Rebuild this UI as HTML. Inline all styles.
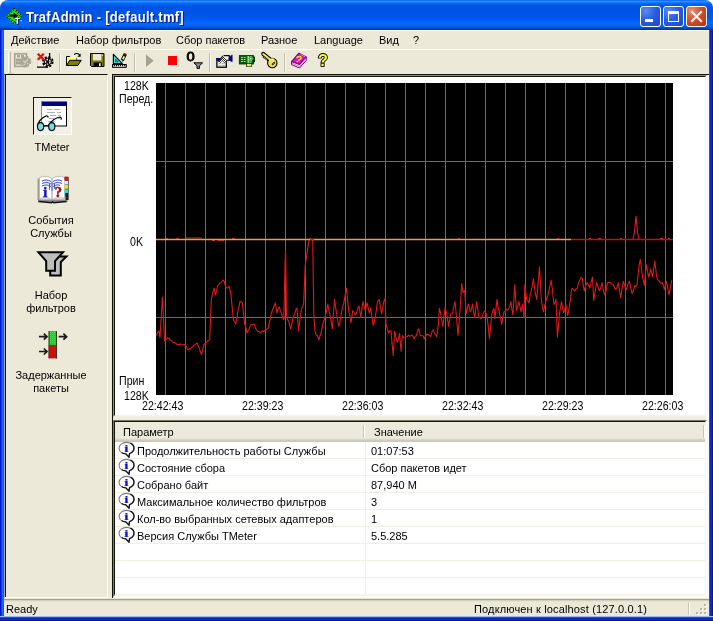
<!DOCTYPE html>
<html lang="ru">
<head>
<meta charset="utf-8">
<title>TrafAdmin - [default.tmf]</title>
<style>
html,body{margin:0;padding:0;background:#fff;}
body{width:713px;height:621px;position:relative;overflow:hidden;font-family:"Liberation Sans",sans-serif;font-size:11px;color:#000;}
.abs{position:absolute;}
#win{filter:brightness(1);position:absolute;left:0;top:0;width:713px;height:621px;background:#ece9d8;border-radius:8px 8px 0 0;overflow:hidden;}
#title{position:absolute;left:0;top:0;width:713px;height:30px;
 background:linear-gradient(to bottom,#0058ee 0%,#3593ff 4%,#288eff 6%,#127dff 8%,#036ffc 10%,#0262ee 14%,#0057e5 20%,#0054e3 24%,#0055eb 56%,#005bf5 66%,#026afe 76%,#0062ef 86%,#0052d6 92%,#0040ab 96%,#003092 100%);}
#title .cap{position:absolute;left:26px;top:10px;color:#fff;font-weight:bold;font-size:13px;line-height:16px;letter-spacing:0.28px;transform:scaleY(1.09);transform-origin:0 13px;white-space:nowrap;text-shadow:1px 1px 0 #0a1883;}
#bl{left:0;top:30px;width:4px;height:591px;background:linear-gradient(to right,#0019cf 0,#0019cf 1px,#0a3ce0 1px,#0a3ce0 2px,#1e66f0 2px,#1e66f0 3px,#2458c8 3px);}
#br{left:709px;top:30px;width:4px;height:591px;background:linear-gradient(to right,#2458d0 0,#2458d0 1px,#0030c0 1px,#0030c0 3px,#001494 3px);}
#bb{left:0;top:616px;width:713px;height:5px;background:linear-gradient(to bottom,#9cb8f4 0,#9cb8f4 1px,#2448c4 1px,#2448c4 2px,#0c30b8 2px,#0428b0 4px,#001c9c 4px);}
.tb{position:absolute;top:6px;width:21px;height:21px;border-radius:3px;box-sizing:border-box;border:1px solid #fff;}
.tb.b{background:radial-gradient(circle at 25% 20%,#5a8cf4 0,#2a5ee0 45%,#1c48c8 100%);}
.tb.r{background:radial-gradient(circle at 25% 20%,#f0906c 0,#d84c28 45%,#b83010 100%);}
#menu{left:4px;top:30px;width:705px;height:20px;background:#ece9d8;border-top:1px solid #fff;box-sizing:border-box;}
#menu span{position:absolute;top:3px;line-height:13px;white-space:nowrap;}
#tbar{left:4px;top:49px;width:705px;height:25px;background:#ece9d8;border-top:1px solid #fff;box-sizing:border-box;}
.sep{position:absolute;top:53px;width:1px;height:19px;background:#c2bfad;border-right:1px solid #f8f7f0;}
.lbl{position:absolute;white-space:nowrap;line-height:13px;text-align:center;}
.ch{position:absolute;white-space:nowrap;font-size:11px;line-height:13px;}
.cl{position:absolute;white-space:nowrap;font-size:12px;line-height:13px;transform:scaleX(0.885);transform-origin:0 0;}
.row{position:absolute;left:115px;width:590px;height:17px;border-bottom:1px solid #f0efe4;box-sizing:border-box;}
.row .t{position:absolute;left:22px;top:3px;line-height:13px;white-space:nowrap;}
.row .v{position:absolute;left:256px;top:3px;line-height:13px;white-space:nowrap;}
.row svg{position:absolute;left:3px;top:-1px;}
</style>
</head>
<body>
<div id="win">
<div id="title">
 <svg class="abs" style="left:4px;top:5px" width="22" height="22" viewBox="4 5 22 22">
<polygon points="14,7.600 22.400,16 14,24.400 5.600,16" fill="#1ed41e"/>
<polygon points="14,8.200 21.800,16 14,23.800 6.200,16" fill="none" stroke="#021402" stroke-width="1.100" stroke-dasharray="1.400 1.400"/>
<polygon points="14,10.100 19.900,16 14,21.900 8.100,16" fill="none" stroke="#063806" stroke-width="0.900" stroke-dasharray="1.400 1.400" stroke-dashoffset="1.400"/>
<polygon points="14,11 19,16 14,21 9,16" fill="#27e627"/>
<path d="M9.600 15.700H15" stroke="#031003" stroke-width="2.300"/>
<polygon points="13.600,12.300 18.200,15.700 13.600,19.100" fill="#031003"/>
<text x="15.600" y="24.600" font-family="Liberation Sans, sans-serif" font-weight="bold" font-size="8.500" fill="#0a1450">T</text>
<text x="14.800" y="23.900" font-family="Liberation Sans, sans-serif" font-weight="bold" font-size="8.500" fill="#f4f4f4">T</text>
<rect x="20.600" y="20" width="1.200" height="1.200" fill="#e8e8ff"/>
</svg>
 <div class="cap">TrafAdmin - [default.tmf]</div>
 <div class="tb b" style="left:640px"><div class="abs" style="left:4px;top:12px;width:8px;height:3px;background:#fff"></div></div>
 <div class="tb b" style="left:663px"><div class="abs" style="left:4px;top:4px;width:11px;height:11px;box-sizing:border-box;border:1px solid #fff;border-top-width:3px"></div></div>
 <div class="tb r" style="left:686px"><svg class="abs" style="left:0;top:0" width="19" height="19" viewBox="0 0 19 19"><path d="M5 5l9 9M14 5l-9 9" stroke="#fff" stroke-width="2.2" stroke-linecap="square"/></svg></div>
</div>
<div id="bl" class="abs"></div><div id="br" class="abs"></div><div id="bb" class="abs"></div>

<div id="menu" class="abs">
 <span style="left:7px">Действие</span>
 <span style="left:72px">Набор фильтров</span>
 <span style="left:172px">Сбор пакетов</span>
 <span style="left:257px">Разное</span>
 <span style="left:310px">Language</span>
 <span style="left:375px">Вид</span>
 <span style="left:409px">?</span>
</div>
<div id="tbar" class="abs"></div>
<svg class="abs" style="left:0;top:50px" width="340" height="24" viewBox="0 50 340 24">
<!-- gripper -->
<rect x="8" y="52" width="1" height="21" fill="#fff"/><rect x="9" y="52" width="1" height="21" fill="#e4e1d0"/><rect x="10" y="52" width="1" height="21" fill="#bdb9a6"/><rect x="8" y="73" width="6" height="1" fill="#c9c6b4"/>
<!-- 1 disabled settings -->
<rect x="14.800" y="53.800" width="11.600" height="12.600" fill="#f1efe4" stroke="#a9a695" stroke-width="1.700"/>
<g fill="#a9a695">
<rect x="17" y="55" width="3" height="2.500"/><rect x="16" y="58.500" width="6" height="3"/><rect x="16" y="61.500" width="5" height="3"/><rect x="21" y="55" width="3" height="3"/>
<circle cx="25.600" cy="61.600" r="4.700"/>
</g>
<circle cx="25.600" cy="61.600" r="5" fill="none" stroke="#a9a695" stroke-width="1.600" stroke-dasharray="2.100 1.830"/>
<path d="M23.200 60.800l1.800 1.900 2.900-3.600" stroke="#dcd9c8" stroke-width="1.100" fill="none"/>
<circle cx="24.200" cy="64.200" r="0.700" fill="#e6e3d2"/><circle cx="27.600" cy="63.800" r="0.700" fill="#e6e3d2"/>
<!-- 2 settings with red x -->
<rect x="37.500" y="53.500" width="12" height="13.500" fill="#f2f0e6" stroke="#dcd9c8" stroke-width="1"/>
<path d="M49.600 53v6M37 67.100h11" stroke="#000" stroke-width="1.300"/>
<circle cx="47.800" cy="61.800" r="4.100" fill="#000"/>
<circle cx="47.800" cy="61.800" r="4.800" fill="none" stroke="#000" stroke-width="2" stroke-dasharray="2.100 1.670"/>
<circle cx="47.800" cy="61.800" r="2.300" fill="none" stroke="#fbfbe4" stroke-width="1.300" stroke-dasharray="1.600 1.200"/>
<path d="M44.400 60l1 0.800M51 59.600l-0.800 0.900M45 65l0.900-0.900M50.800 64.600l-0.900-0.800" stroke="#fff" stroke-width="0.900"/>
<path d="M37.800 53.800l6 6M43.800 53.800l-6 6" stroke="#ee0808" stroke-width="2.300"/>
<!-- 3 open -->
<path d="M66.5 65.5v-9h3.2l1 1.3h5.3v2.2" fill="#ffff80" stroke="#000" stroke-width="1"/>
<rect x="67" y="57" width="9" height="8" fill="#ffff80"/>
<path d="M66.5 65.5l3.2-5.2h11.5l-3.4 5.2z" fill="#808000" stroke="#000" stroke-width="1"/>
<path d="M74.2 54.6c1.4-1.6 4.2-1.6 5.6 0.6" fill="none" stroke="#000" stroke-width="1.1"/>
<path d="M80.6 53.4v3.4h-3.2z" fill="#000"/>
<!-- 4 save -->
<path d="M90.5 53.5h13.5v13h-12.5l-1-1z" fill="#808000" stroke="#000" stroke-width="1"/>
<rect x="93" y="54" width="8.4" height="6.4" fill="#e9e7d6"/>
<rect x="93.6" y="62.4" width="8.4" height="4" fill="#000"/>
<rect x="99" y="63.2" width="1.6" height="3" fill="#fff"/>
<rect x="102" y="54.6" width="1" height="1.4" fill="#d8d6a8"/>
<!-- 5 triangle ruler pencil -->
<path d="M113.400 54.300v9.300h9z" fill="#3fe6ee" stroke="#000" stroke-width="1.200" stroke-linejoin="round"/>
<path d="M115.600 59.200v2.600h2.500z" fill="#8af4f8" stroke="#003838" stroke-width="0.900"/>
<rect x="112.600" y="64.600" width="13.600" height="2.700" fill="#fbfbf4" stroke="#000" stroke-width="1.100"/>
<path d="M114.500 64.600v1.600M116.500 64.600v1.600M118.500 64.600v1.600M120.500 64.600v1.600M122.500 64.600v1.600M124.500 64.600v1.600" stroke="#000" stroke-width="0.900"/>
<path d="M125.300 53.900l-3 6.300" stroke="#000" stroke-width="3.400" stroke-linecap="butt"/>
<path d="M124.300 56.300l-1.500 3.100" stroke="#f8ea80" stroke-width="1.900"/>
<path d="M125.500 53.600l-1 2.100" stroke="#5a1808" stroke-width="2.400"/>
<path d="M122.700 59.700l-1 2.300 2.200-1.500z" fill="#000"/>
<!-- 6 play disabled -->
<path d="M146 54.4v12.6l7.6-6.3z" fill="#a5a292"/>
<!-- 7 stop -->
<rect x="168" y="56" width="9" height="9" fill="#fb0000"/>
<!-- 8 zero + funnel -->
<text x="0" y="0" transform="translate(186.6,61.4) scale(1.32,1.08)" font-family="Liberation Sans, sans-serif" font-size="11.2" fill="#000" stroke="#000" stroke-width="0.7">0</text>
<path d="M193.8 62.8h8.8l-3.2 3v2.6h-2.4v-2.6z" fill="#8c8c8c" stroke="#000" stroke-width="1" stroke-linejoin="miter"/>
<!-- 9 properties -->
<defs><pattern id="chk" width="2" height="2" patternUnits="userSpaceOnUse"><rect width="2" height="2" fill="#fff"/><rect width="1" height="1" fill="#222"/><rect x="1" y="1" width="1" height="1" fill="#222"/></pattern></defs>
<rect x="216.900" y="58.800" width="9.400" height="8.400" fill="#f0eee2" stroke="#000" stroke-width="1.300"/>
<path d="M216.300 58.100h4.600l-2.200 3.300l-2.400-1.600z" fill="#000078"/>
<path d="M218.500 63.500h2.400M222 63.500h2.600M218.500 65.500h2.400M222 65.500h2.600" stroke="#b9b7aa" stroke-width="1"/>
<path d="M223.600 55.600h5.600v4.700h-3.400" fill="#f4f3ea" stroke="#000" stroke-width="1.100"/>
<path d="M218.600 61.400l4.400-5.600 4.200 4.800-2.800 2.400-2-2.400-2 2.400z" fill="url(#chk)"/>
<path d="M218.400 61.600l4.600-5.800" stroke="#111" stroke-width="1.100" fill="none"/>
<path d="M229.200 57l3-2.100v6.900l-3-1.600z" fill="#000084" stroke="#000084" stroke-width="0.600" stroke-linejoin="round"/>
<!-- 10 nic -->
<rect x="239.300" y="55.600" width="14.200" height="8.400" fill="#0b5c0b" stroke="#022802" stroke-width="0.800"/>
<rect x="252.800" y="56.600" width="2.200" height="5.600" fill="#033003"/>
<path d="M241 57.500h2M243.800 57.500h1.800M241 59.500h2M243.800 59.500h1.800M241 61.500h2M243.800 61.500h1.800" stroke="#8fe88f" stroke-width="1.100"/>
<rect x="247.400" y="56" width="1.700" height="8" fill="#8ee08e"/>
<circle cx="250.700" cy="58.600" r="2.100" fill="#22b822" stroke="#c8f8c8" stroke-width="0.800" stroke-dasharray="0.900 0.700"/>
<rect x="250.100" y="58" width="1.200" height="1.200" fill="#e8ffe8"/>
<rect x="249.600" y="61.200" width="2" height="2.200" fill="#6ad06a"/>
<rect x="246.500" y="63.600" width="5.200" height="3" fill="#d8d820" stroke="#1c1c00" stroke-width="0.700"/>
<path d="M248.200 64v2.400M250 64v2.400" stroke="#fffff0" stroke-width="0.700"/>
<!-- 11 key -->
<path d="M263.200 53.900l7 5.800" stroke="#000" stroke-width="4.100" stroke-linecap="round"/>
<path d="M263.400 56.400l1.500 1.500M265.300 57.800l1.500 1.500M267.300 59.400l1.300 1.300" stroke="#000" stroke-width="2.200"/>
<circle cx="272.300" cy="63" r="4.700" fill="#efe645" stroke="#000" stroke-width="1.100"/>
<path d="M263.300 54l7.400 6.100" stroke="#efe645" stroke-width="2.100" stroke-linecap="round"/>
<path d="M263.600 56.900l1 1M265.500 58.300l1 1" stroke="#e0d838" stroke-width="0.900"/>
<path d="M269.400 60.400a4 4 0 0 1 4.500-1.500" stroke="#fffbd0" stroke-width="0.900" fill="none"/>
<path d="M272.600 64.300l1.800-1.700" stroke="#000" stroke-width="1.700" stroke-linecap="round"/>
<path d="M272.800 64.100l1.400-1.300" stroke="#d8d4b0" stroke-width="0.600" stroke-linecap="round"/>
<!-- 12 book -->
<path d="M291.5 61.6v3l8 3.4 6.8-7.6v-3.2z" fill="#fbe6f6" stroke="#7c007c" stroke-width="1" stroke-linejoin="round"/>
<path d="M291.5 61.6l7.4-8.4 7.4 3.8-6.8 7.4z" fill="#d412c4" stroke="#7c007c" stroke-width="1.1" stroke-linejoin="round"/>
<path d="M292 63.2l7.6 3.2 6.4-7.2" stroke="#c060c0" stroke-width="0.8" fill="none"/>
<path d="M296.6 58.2c1-2.4 4.6-2.4 4.4 0-0.2 1.4-2 1.2-2.8 2.4" stroke="#ffe020" stroke-width="1.5" fill="none"/>
<circle cx="297.4" cy="61.6" r="0.9" fill="#ffe020"/>
<path d="M300.5 54.4l4.8 2.5" stroke="#ff60e8" stroke-width="1"/>
<!-- 13 question -->
<text x="318" y="66.2" font-family="Liberation Sans, sans-serif" font-weight="bold" font-size="16.2" fill="#ffff20" stroke="#000" stroke-width="1.9" paint-order="stroke" stroke-linejoin="round">?</text>
</svg>
<div class="sep" style="left:59px"></div><div class="sep" style="left:134px"></div><div class="sep" style="left:209px"></div><div class="sep" style="left:284px"></div>


<!-- left pane -->
<div class="abs" style="left:4px;top:74px;width:104px;height:524px;box-sizing:border-box;background:#ece9d8;border-left:1px solid #a4a8b8;border-top:1px solid #15150a;border-right:1px solid #fff;border-bottom:1px solid #fff;"></div>
<div class="abs" style="left:5px;top:74px;width:1px;height:523px;background:#15150a"></div>

<!-- TMeter selected box -->
<div class="abs" style="left:33px;top:97px;width:39px;height:38px;box-sizing:border-box;background:#f2f0e6;border-top:1px solid #15150a;border-left:1px solid #15150a;border-right:1px solid #fff;border-bottom:1px solid #fff"></div>
<svg class="abs" style="left:34px;top:98px" width="37" height="36" viewBox="34 98 37 36">
<rect x="41.5" y="102" width="25" height="24" fill="#fff" stroke="#000" stroke-width="1"/>
<rect x="41" y="101.5" width="1" height="25" fill="#8c8c8c"/>
<rect x="42" y="102" width="24.5" height="4" fill="#000084"/>
<path d="M47 109.5h5.5M54 109.5h6M47 112.5h8M57 112.5h4M50 115.5h6M58 115.5h3M49 118.5h5M56 118.5h4M48 121.500h7" stroke="#b0b0b8" stroke-width="1"/>
<path d="M37.4 125.4c1-3.4 4.6-7.6 8.6-9.4 1.4-0.4 2 0.2 2.2 1.6M48.6 125c2.6-3.6 7.4-7.4 11.2-8 1.4 0 1.6 1 1.4 2.8" fill="none" stroke="#000" stroke-width="1.2"/>
<ellipse cx="40.6" cy="126.6" rx="3.1" ry="4" fill="#5ee6ee" stroke="#000" stroke-width="1.1"/>
<ellipse cx="51.8" cy="126.6" rx="3.1" ry="4" fill="#5ee6ee" stroke="#000" stroke-width="1.1"/>
<path d="M39.4 125l1.6 3.4M50.6 125l1.6 3.400" stroke="#b8c4c4" stroke-width="1.6"/>
<path d="M43.6 126.4c1.600-1.200 3.4-1.200 5.200 0" fill="none" stroke="#000" stroke-width="1.1"/>
</svg>
<div class="lbl" style="left:12px;width:80px;top:141px">TMeter</div>

<!-- events book -->
<svg class="abs" style="left:35px;top:173px" width="36" height="32" viewBox="35 173 36 32">
<path d="M37.5 178.500h2v21.500h-2z" fill="#9c9c9c"/>
<path d="M38 199.500h29.500v2.500h-29.500z" fill="#8a8a8a"/>
<path d="M38.500 201.500l13 1.200 1-1 1 1 13-1.200" fill="none" stroke="#111" stroke-width="1.300"/>
<path d="M64 177h4.600v23h-3z" fill="#222"/>
<path d="M39.500 177.600c4.500-2 9-1.800 12.500 1.400 3.500-3.200 8-3.400 12.500-1.400v21c-4.500-1.600-9-1.400-12.500 1.400-3.500-2.800-8-3-12.500-1.400z" fill="#fff" stroke="#b4b4b4" stroke-width="0.900"/>
<path d="M52 179v21" stroke="#9a9a9a" stroke-width="1"/>
<path d="M42 181c3-1.400 6-1.400 9 0.600M42 183.500c3-1.400 6-1.400 9 0.600M42 186c3-1.400 6-1.400 9 0.600M53 181.600c3-2 6-2 9-0.600M53 184.100c3-2 6-2 9-0.600M53 186.600c3-2 5-2 7-1.200" fill="none" stroke="#2030c0" stroke-width="0.900"/>
<path d="M52 182v9M49.500 184v6M54.500 184v5" stroke="#3040c8" stroke-width="0.800"/>
<text x="45.200" y="196.500" text-anchor="middle" font-family="Liberation Serif, serif" font-weight="bold" font-size="14" fill="#1818c0" stroke="#1818c0" stroke-width="0.6">i</text>
<text x="58.400" y="196.500" text-anchor="middle" font-family="Liberation Serif, serif" font-weight="bold" font-size="14.500" fill="#a00a14" stroke="#a00a14" stroke-width="0.5">?</text>
<rect x="64.500" y="176.600" width="3.600" height="3.800" fill="#e01010"/>
<rect x="64.500" y="180.800" width="3.600" height="3.800" fill="#e8e8e8"/>
<rect x="64.500" y="185" width="3.600" height="3.800" fill="#f0e020"/>
<rect x="64.500" y="189.200" width="3.600" height="3.800" fill="#20e0e8"/>
</svg>
<div class="lbl" style="left:11px;width:80px;top:214px">События<br>Службы</div>

<!-- funnels -->
<svg class="abs" style="left:34px;top:248px" width="36" height="32" viewBox="34 248 36 32">
<path d="M56 256.500h10.400l-5.600 5.600v13.400h-10.600v-5" fill="#bdbdbd" stroke="#000" stroke-width="2" stroke-linejoin="miter"/>
<path d="M38.400 252.200h24.600l-8 9v9.600h-8.800v-9.600z" fill="#bdbdbd" stroke="#000" stroke-width="2" stroke-linejoin="miter"/>
</svg>
<div class="lbl" style="left:11px;width:80px;top:289px">Набор<br>фильтров</div>

<!-- delayed packets -->
<svg class="abs" style="left:36px;top:328px" width="34" height="34" viewBox="36 328 34 34">
<rect x="48.600" y="331" width="8.400" height="14" fill="#22cc30"/>
<rect x="48.600" y="345" width="8.400" height="13.400" fill="#cc1010"/>
<path d="M49.100 331v27.400M56.500 331v27.400" stroke="#3a3a20" stroke-width="1"/>
<path d="M50 332.500h6M50 334.500h6M50 336.500h6M50 338.500h6M50 340.500h6M50 342.500h6" stroke="#60e860" stroke-width="0.700" stroke-dasharray="1 1"/>
<g fill="none" stroke="#1a1a1a" stroke-width="1.700">
<path d="M39 336.700h8M43.800 333.700l3.200 3-3.200 3"/>
<path d="M58.600 336.700h8M63.400 333.700l3.200 3-3.200 3"/>
<path d="M39 351.500h8M43.800 348.500l3.200 3-3.200 3"/>
</g>
</svg>
<div class="lbl" style="left:11px;width:80px;top:369px">Задержанные<br>пакеты</div>


<!-- right panes container -->
<div class="abs" style="left:112px;top:74px;width:597px;height:524px;background:#15150a"></div>
<div class="abs" style="left:113px;top:75px;width:596px;height:523px;background:#faf9f3"></div>
<div class="abs" style="left:113px;top:416px;width:593px;height:4px;background:#eeecdf"></div>
<!-- chart pane -->
<div class="abs" style="left:113px;top:75px;width:594px;height:342px;box-sizing:border-box;border:1px solid #8e8e86;border-right-color:#fdfdf8;border-bottom-color:#f1efe4"></div>
<div class="abs" style="left:114px;top:76px;width:592px;height:340px;box-sizing:border-box;background:#fff;border:1px solid #15150a;border-right-color:#f7f6ee;border-bottom-color:#f4f3ea"></div>
<svg class="abs" style="left:156px;top:83px" width="517" height="312" viewBox="156 83 517 312">
<rect x="156" y="83" width="517" height="312" fill="#000"/>
<path d="M165.5 83V395M185.5 83V395M205.5 83V395M225.5 83V395M245.5 83V395M265.5 83V395M285.5 83V395M305.5 83V395M325.5 83V395M345.5 83V395M365.5 83V395M385.5 83V395M405.5 83V395M425.5 83V395M445.5 83V395M465.5 83V395M485.5 83V395M505.5 83V395M525.5 83V395M545.5 83V395M565.5 83V395M585.5 83V395M605.5 83V395M625.5 83V395M645.5 83V395M665.5 83V395M156 161.5H673M156 317.5H673" stroke="#737030" stroke-width="1" fill="none" shape-rendering="crispEdges"/>
<polyline fill="none" stroke="#e01818" stroke-width="1.1" stroke-linejoin="round" points="156,335.5 157,333.8 158,332 159,331 160,337.7 161.2,317.5 162.4,297 163.5,318.7 164.6,341 165.7,340 166.9,338.6 168,337.7 169.1,338.2 170.2,339.9 171.4,340.3 172.5,342 173.6,342.5 174.8,342.6 175.9,343.3 177,344.5 178,344.4 179,345 180,344 181,344.1 182,344.7 183,345.1 184,344.6 185,344.5 186.1,346.2 187.2,348.8 188.3,350 189.4,348.5 190.6,348.9 191.7,347.2 192.8,346.7 193.9,345.3 195.1,344.3 196.2,343.7 197.3,343 198.3,346.3 199.4,348.4 200.4,351.8 201.4,354.6 202.7,349.7 204,344.5 205.1,343.4 206.3,342.8 207.4,341.2 208.6,340.3 209.7,340 211.3,299.4 212.8,292.7 214.2,288 215.4,295 216.5,291.1 217.6,285.9 218.7,284.5 219.9,282.9 221,282.7 222.2,281 223.3,280 224.4,282 225.5,286.3 226.6,288 227.8,287.7 229,286 230,289.6 231,295 232.2,307.4 233.4,319.7 234.6,321.9 235.7,324 236.8,318.6 238,310.7 239,306.9 240,301.6 241.2,301.5 242.4,302.8 243.6,313.8 244.7,324 245.8,327.2 247,333 248,330.6 249,329.5 250,326.5 251.1,324.5 252.3,324.8 253.4,324 254.5,324.4 255.7,328.6 256.8,330 257.9,331.4 259.1,331.2 260.2,332.8 261.3,332 262.4,330.8 263.5,331.6 264.6,330.7 265.8,330.1 266.9,329.1 268,328.7 269.1,323.7 270.3,318.6 271.4,313 272.7,309.5 273.9,306.8 275.2,302.8 277,313 278.1,308.5 279.3,307 280.4,310.9 281.6,313.9 282.7,318.2 283.8,319.7 285,265.6 285.6,249.8 286.5,315 287.5,319.5 288.6,321.1 289.6,324.9 290.6,328.7 291.7,324.7 292.9,317.9 294,315 295,312.5 296,309.2 297,308 298.5,331 299.6,321.7 300.7,313 301.7,308.1 302.7,307.1 303.7,302.8 305.2,265.6 306.4,257.4 307.5,249.8 309,239.6 310.2,238.7 311.5,239.2 312.7,239.6 313.8,315 315,331 316.3,335.3 317.5,335.6 318.8,340 319.9,336.3 321,333 322.1,327.7 323.3,322 324.4,319.8 325.5,315 326.6,310.6 327.8,304 328.9,310.7 330,315 331.1,321.1 332.3,328.7 333.4,314 334.5,299.4 335.6,307.1 336.8,315 337.9,322 339,326.4 340.1,321.3 341.3,313 342.5,307.3 343.6,304 345.1,295.7 346.5,288 347.6,299.1 348.7,310.7 349.9,315.9 351,323 352.7,310.7 354.1,312.8 355.6,315 356.7,312.3 357.9,308.2 359,306 360.8,317.4 361.9,309.1 363,301.6 364.1,305.9 365.3,310.7 367,302.8 368.1,307.5 369.2,313 370.7,308.4 371.9,316.9 373.2,325.3 374.2,322.9 375.2,317.4 376.4,309.7 377.5,301.6 379.3,299.4 380.5,306.7 381.6,314 382.7,308.2 383.8,301.6 385.2,298.3 386,324.2 387.4,329.3 388.8,333.2 389.9,330.6 391,331 392.1,343.7 393.3,355.7 394.6,331 396,337.6 397.3,342.2 398.5,339 399.6,333.2 401,351.2 402.3,335.5 403.8,337.6 405.2,337.7 406.3,336.9 407.5,336.5 408.6,335 409.8,336.4 410.9,335.5 412,335.1 413.1,336.2 414.2,338.8 415.4,336.2 416.5,335.5 418.3,328.7 419.3,331 420.3,335.5 421.3,335.8 422.4,335.6 423.4,336.3 424.4,338.8 425.5,336.1 426.7,334.4 427.8,334.3 429.2,335 430.7,336.6 432,331.6 433.4,329.8 434.5,333.3 435.7,334.7 436.8,336.6 438.4,324.2 439.3,308.4 440.3,311.7 441.3,317.4 442.9,326.4 444,316.7 445.1,307.3 447,315 448.5,326.4 449.6,319.7 450.8,314 452.3,314 453.6,307.3 455,301.6 456.3,315 458.1,335.5 460,310.7 461.7,283.6 463,292.6 464.7,290.4 466.2,314 467.4,307.7 468.5,304 470.3,311.8 471.4,309.1 472.5,304 473.6,312.4 474.8,317.4 476.6,301.6 477.8,309.5 478.9,317.4 480.2,317.9 481.6,318.6 482.7,314.6 483.9,312 485,310.7 486.1,313.5 487.2,317.4 488.4,327.9 489.5,338.8 490.6,327.2 491.7,315 492.9,310.5 494,308.4 495,318.6 496,308.6 497,299.4 498,306.6 499,310.7 500.4,317.5 501.8,324.2 502.9,316.8 504,311.8 505.1,311.4 506.1,309 507.1,310.2 508.2,309.5 509.5,307.2 510.9,301.6 511.9,309.5 513,315 514.7,284.7 516.5,310.7 517.6,306.8 518.8,301.6 519.9,305.9 521,311.8 522.6,304 524,317.4 524.8,284.7 526.6,299.4 527.8,300.6 529,302.8 530,296 531,291.5 532.2,286.2 533.4,279 535.2,292.6 536.8,299.4 538.1,283.1 539.5,266.7 541.3,299.4 542.4,306.5 543.5,311.8 544.6,306.1 545.8,301.6 546.9,297.3 548,294.9 549,290.2 550,285.5 551,280.2 552.2,288 554,304.5 555,302.9 556,299 557.4,337.3 558.5,325.2 559.6,312.7 561.5,301.7 562.6,308.3 563.7,312.7 564.8,309.4 565.9,304.5 567.8,315.4 569.7,304.5 570.8,296 571.9,288 573.2,289.5 574.6,290.8 576,288.9 577.4,288 578.7,282.3 580,279.8 581.1,277.5 582.3,278.5 584.2,290.8 585.6,286 587,282.6 588.4,284.5 589.7,288 591,283.2 592.4,277 593.8,300.4 595.1,291.9 596.5,282.6 597.9,286.5 599.3,290.8 600.6,288.2 602,282.6 603.4,290.4 604.7,294.9 606.1,290.3 607.5,282.6 608.5,282.5 609.5,282.3 610.6,282.7 611.6,284 612.6,284.3 613.7,285.7 614.7,288.5 615.7,289.4 617,287.4 618.4,282.6 619.5,290.4 620.6,297.6 622,289.4 623.3,281.2 624.4,284.5 625.5,287.7 626.6,289.4 628,283.9 629.4,281.2 630.7,287.9 632,293.5 633.4,290.8 634.8,285.3 635.9,286.3 637,285.3 638,275.9 639,266 640.3,259.3 641.4,268.1 642.5,277 644.4,285.3 646.3,264.8 647.4,269.8 648.5,277 649.6,274 650.7,269 652.6,277 653.7,268.7 654.8,260.7 656.7,277 658.1,280.1 659.5,281.2 660.9,283.5 662.2,282.6 663.3,285.6 664.4,289.4 666.3,281.2 667.6,287.7 669,294.9 670.4,287.7 671.8,279.8"/>
<path d="M156 239.5H571" stroke="#f0a020" stroke-width="1.6" fill="none"/>
<path d="M571 239.5H673" stroke="#c01010" stroke-width="1.4" fill="none"/>
<polyline fill="none" stroke="#e02020" stroke-width="1.1" points="633,239 634.5,232 636,216 637.5,232 639,239"/>
<path d="M310 239.5h4M458 238.5h2M557 238.5h2M589 238.5h2M598 238.5h3M620 238.5h2M660 238.5h3M668 238.5h2" stroke="#e02020" stroke-width="1" fill="none"/>
<path d="M166 238.5h2M176 238.5h3M186 238h16M212 240.5h3M218 240.5h6M232 238.5h3" stroke="#d03818" stroke-width="1" fill="none"/>
</svg>
<div class="cl" style="left:123.5px;top:80px">128K</div>
<div class="cl" style="left:119px;top:93px">Перед.</div>
<div class="cl" style="left:130.3px;top:236px">0K</div>
<div class="cl" style="left:119px;top:375px">Прин</div>
<div class="cl" style="left:123.5px;top:390px">128K</div>
<div class="cl" style="left:141.5px;top:400px">22:42:43</div>
<div class="cl" style="left:241.5px;top:400px">22:39:23</div>
<div class="cl" style="left:341.5px;top:400px">22:36:03</div>
<div class="cl" style="left:441.5px;top:400px">22:32:43</div>
<div class="cl" style="left:541.5px;top:400px">22:29:23</div>
<div class="cl" style="left:641.5px;top:400px">22:26:03</div>

<!-- list pane -->
<div class="abs" style="left:113px;top:420px;width:594px;height:177px;box-sizing:border-box;border:1px solid #77776c;border-right-color:#fdfdf8;border-bottom-color:#fdfdf8"></div>
<div class="abs" style="left:114px;top:421px;width:592px;height:175px;box-sizing:border-box;background:#fff;border:1px solid #15150a;border-right:1px solid #f7f6ee;border-bottom:2px solid #f6f5ec"></div>
<div class="abs" style="left:115px;top:422px;width:590px;height:20px;background:linear-gradient(to bottom,#ebeadb 0,#ebeadb 16px,#e0ddce 17px,#d4d1c2 18px,#cac7b8 19px,#cac7b8 20px)"></div>
<div class="abs" style="left:363px;top:425px;width:1px;height:13px;background:#c9c6b6;border-right:1px solid #fff"></div>
<div class="abs" style="left:703px;top:425px;width:1px;height:13px;background:#c9c6b6;border-right:1px solid #fff"></div>
<div class="ch" style="left:123px;top:426px">Параметр</div>
<div class="ch" style="left:374px;top:426px">Значение</div>
<div class="abs" style="left:365px;top:442px;width:1px;height:152px;background:#f0efe4"></div>
<div class="row" style="top:442px"><svg width="17" height="17" viewBox="118 441 17 17"><path d="M126.5 442.4c4.2 0 7.4 2.5 7.4 5.8 0 2.4-1.8 4.4-4.4 5.3l-0.6 3.6-3.2-3.2c-3.8-0.2-6.6-2.6-6.6-5.7 0-3.3 3.2-5.8 7.4-5.8z" fill="#fff" stroke="#7e7e7e" stroke-width="1.1"/><path d="M130.4 443.2c2.2 1 3.6 2.8 3.6 5 0 2.4-1.8 4.4-4.4 5.3l-0.6 3.6-3.2-3.2c-1.6-0.1-3-0.6-4.2-1.4" fill="none" stroke="#111" stroke-width="1.3"/><text x="0" y="0" transform="translate(126.500,451.600) scale(1.450,1)" text-anchor="middle" font-family="Liberation Serif, serif" font-weight="bold" font-size="10.600" fill="#0a0ad2" stroke="#0a0ad2" stroke-width="0.150">i</text></svg><span class="t">Продолжительность работы Службы</span><span class="v">01:07:53</span></div>
<div class="row" style="top:459px"><svg width="17" height="17" viewBox="118 441 17 17"><path d="M126.5 442.4c4.2 0 7.4 2.5 7.4 5.8 0 2.4-1.8 4.4-4.4 5.3l-0.6 3.6-3.2-3.2c-3.8-0.2-6.6-2.6-6.6-5.7 0-3.3 3.2-5.8 7.4-5.8z" fill="#fff" stroke="#7e7e7e" stroke-width="1.1"/><path d="M130.4 443.2c2.2 1 3.6 2.8 3.6 5 0 2.4-1.8 4.4-4.4 5.3l-0.6 3.6-3.2-3.2c-1.6-0.1-3-0.6-4.2-1.4" fill="none" stroke="#111" stroke-width="1.3"/><text x="0" y="0" transform="translate(126.500,451.600) scale(1.450,1)" text-anchor="middle" font-family="Liberation Serif, serif" font-weight="bold" font-size="10.600" fill="#0a0ad2" stroke="#0a0ad2" stroke-width="0.150">i</text></svg><span class="t">Состояние сбора</span><span class="v">Сбор пакетов идет</span></div>
<div class="row" style="top:476px"><svg width="17" height="17" viewBox="118 441 17 17"><path d="M126.5 442.4c4.2 0 7.4 2.5 7.4 5.8 0 2.4-1.8 4.4-4.4 5.3l-0.6 3.6-3.2-3.2c-3.8-0.2-6.6-2.6-6.6-5.7 0-3.3 3.2-5.8 7.4-5.8z" fill="#fff" stroke="#7e7e7e" stroke-width="1.1"/><path d="M130.4 443.2c2.2 1 3.6 2.8 3.6 5 0 2.4-1.8 4.4-4.4 5.3l-0.6 3.6-3.2-3.2c-1.6-0.1-3-0.6-4.2-1.4" fill="none" stroke="#111" stroke-width="1.3"/><text x="0" y="0" transform="translate(126.500,451.600) scale(1.450,1)" text-anchor="middle" font-family="Liberation Serif, serif" font-weight="bold" font-size="10.600" fill="#0a0ad2" stroke="#0a0ad2" stroke-width="0.150">i</text></svg><span class="t">Собрано байт</span><span class="v">87,940 M</span></div>
<div class="row" style="top:493px"><svg width="17" height="17" viewBox="118 441 17 17"><path d="M126.5 442.4c4.2 0 7.4 2.5 7.4 5.8 0 2.4-1.8 4.4-4.4 5.3l-0.6 3.6-3.2-3.2c-3.8-0.2-6.6-2.6-6.6-5.7 0-3.3 3.2-5.8 7.4-5.8z" fill="#fff" stroke="#7e7e7e" stroke-width="1.1"/><path d="M130.4 443.2c2.2 1 3.6 2.8 3.6 5 0 2.4-1.8 4.4-4.4 5.3l-0.6 3.6-3.2-3.2c-1.6-0.1-3-0.6-4.2-1.4" fill="none" stroke="#111" stroke-width="1.3"/><text x="0" y="0" transform="translate(126.500,451.600) scale(1.450,1)" text-anchor="middle" font-family="Liberation Serif, serif" font-weight="bold" font-size="10.600" fill="#0a0ad2" stroke="#0a0ad2" stroke-width="0.150">i</text></svg><span class="t">Максимальное количество фильтров</span><span class="v">3</span></div>
<div class="row" style="top:510px"><svg width="17" height="17" viewBox="118 441 17 17"><path d="M126.5 442.4c4.2 0 7.4 2.5 7.4 5.8 0 2.4-1.8 4.4-4.4 5.3l-0.6 3.6-3.2-3.2c-3.8-0.2-6.6-2.6-6.6-5.7 0-3.3 3.2-5.8 7.4-5.8z" fill="#fff" stroke="#7e7e7e" stroke-width="1.1"/><path d="M130.4 443.2c2.2 1 3.6 2.8 3.6 5 0 2.4-1.8 4.4-4.4 5.3l-0.6 3.6-3.2-3.2c-1.6-0.1-3-0.6-4.2-1.4" fill="none" stroke="#111" stroke-width="1.3"/><text x="0" y="0" transform="translate(126.500,451.600) scale(1.450,1)" text-anchor="middle" font-family="Liberation Serif, serif" font-weight="bold" font-size="10.600" fill="#0a0ad2" stroke="#0a0ad2" stroke-width="0.150">i</text></svg><span class="t">Кол-во выбранных сетевых адаптеров</span><span class="v">1</span></div>
<div class="row" style="top:527px"><svg width="17" height="17" viewBox="118 441 17 17"><path d="M126.5 442.4c4.2 0 7.4 2.5 7.4 5.8 0 2.4-1.8 4.4-4.4 5.3l-0.6 3.6-3.2-3.2c-3.8-0.2-6.6-2.6-6.6-5.7 0-3.3 3.2-5.8 7.4-5.8z" fill="#fff" stroke="#7e7e7e" stroke-width="1.1"/><path d="M130.4 443.2c2.2 1 3.6 2.8 3.6 5 0 2.4-1.8 4.4-4.4 5.3l-0.6 3.6-3.2-3.2c-1.6-0.1-3-0.6-4.2-1.4" fill="none" stroke="#111" stroke-width="1.3"/><text x="0" y="0" transform="translate(126.500,451.600) scale(1.450,1)" text-anchor="middle" font-family="Liberation Serif, serif" font-weight="bold" font-size="10.600" fill="#0a0ad2" stroke="#0a0ad2" stroke-width="0.150">i</text></svg><span class="t">Версия Службы TMeter</span><span class="v">5.5.285</span></div>
<div class="row" style="top:544px"></div>
<div class="row" style="top:561px"></div>

<!-- status bar -->
<div class="abs" style="left:4px;top:599px;width:705px;height:17px;background:linear-gradient(to bottom,#a29f8d 0,#a29f8d 1px,#d2cfbd 1px,#d2cfbd 2px,#e5e2d1 2px,#e5e2d1 3px,#ece9d8 3px,#ece9d8 100%)"></div>
<div class="ch" style="left:6px;top:603px">Ready</div>
<div class="ch" style="left:474px;top:603px;letter-spacing:0.15px">Подключен к localhost (127.0.0.1)</div>
<div class="abs" style="left:688px;top:602px;width:1px;height:13px;background:#c9c6b6;border-right:1px solid #fff"></div>
<svg class="abs" style="left:696px;top:604px" width="12" height="12" viewBox="0 0 12 12"><g fill="#fff"><rect x="9" y="1" width="2" height="2"/><rect x="5" y="5" width="2" height="2"/><rect x="9" y="5" width="2" height="2"/><rect x="1" y="9" width="2" height="2"/><rect x="5" y="9" width="2" height="2"/><rect x="9" y="9" width="2" height="2"/></g><g fill="#b8b4a2"><rect x="8" y="0" width="2" height="2"/><rect x="4" y="4" width="2" height="2"/><rect x="8" y="4" width="2" height="2"/><rect x="0" y="8" width="2" height="2"/><rect x="4" y="8" width="2" height="2"/><rect x="8" y="8" width="2" height="2"/></g></svg>
</div>
</body>
</html>
